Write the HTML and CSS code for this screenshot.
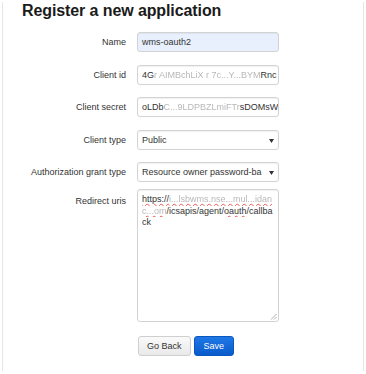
FILE: index.html
```html
<!DOCTYPE html>
<html>
<head>
<meta charset="utf-8">
<link rel="stylesheet" href="styles.css">
</head>
<body>
<div class="panel">
  <h1 class="title">Register a new application</h1>
  <form class="form">
    <div class="row">
      <label class="label">Name</label>
      <div class="field autofill">wms-oauth2</div>
    </div>
    <div class="row">
      <label class="label">Client id</label>
      <div class="field">4G<span class="blur">r AIMBchLiX r 7c...Y...BYM</span>Rnc</div>
    </div>
    <div class="row">
      <label class="label">Client secret</label>
      <div class="field">oLDb<span class="blur">C...9LDPBZLmiFTr</span>sDOMsW</div>
    </div>
    <div class="row">
      <label class="label">Client type</label>
      <div class="field select">Public<svg class="caret" width="5" height="4" viewBox="0 0 5 4"><path d="M0 0H5L2.5 4Z" fill="#333"/></svg></div>
    </div>
    <div class="row tight">
      <label class="label">Authorization grant type</label>
      <div class="field select"><span class="clip">Resource owner password-ba</span><svg class="caret" width="5" height="4" viewBox="0 0 5 4"><path d="M0 0H5L2.5 4Z" fill="#333"/></svg></div>
    </div>
    <div class="row">
      <label class="label">Redirect uris</label>
      <div class="area">
        <div class="line"><span class="sp">https://</span><span class="sp blur">i...lsbwms.nse...mul...idan</span></div>
        <div class="line"><span class="sp blur">c...om</span>/icsapis/agent/<span class="sp">oauth</span>/callba</div>
        <div class="line">ck</div>
        <svg class="grip" width="7" height="7" viewBox="0 0 7 7"><path d="M6.5 1L1 6.5M6.5 4L4 6.5" stroke="#999" stroke-width="0.8"/></svg>
      </div>
    </div>
    <div class="actions">
      <button type="button" class="btn">Go Back</button>
      <button type="button" class="btn primary">Save</button>
    </div>
  </form>
</div>
</body>
</html>
```
FILE: styles.css
```css
html, body {
  margin: 0;
  padding: 0;
  background: #fff;
  overflow: hidden;
}
body {
  font-family: "Liberation Sans", Arial, sans-serif;
  color: #333;
}
.panel {
  box-sizing: border-box;
  margin: 2px 0 0 2px;
  width: 362px;
  height: 369px;
  border-left: 1px solid #e6e6e6;
  border-right: 1px solid #e6e6e6;
}
.title {
  margin: 0;
  padding-left: 19px;
  font-size: 16px;
  line-height: 18px;
  font-weight: bold;
  color: #1b1b1b;
  letter-spacing: -0.1px;
}
.form {
  margin-top: 12px;
}
.row {
  display: flex;
  gap: 11px;
  margin-bottom: 12.5px;
}
.row.tight {
  margin-bottom: 9px;
}
.label {
  width: 123px;
  flex: none;
  text-align: right;
  font-size: 9px;
  line-height: 20px;
  color: #333;
}
.field {
  box-sizing: border-box;
  width: 142px;
  height: 20px;
  border: 1px solid #d3d3d3;
  border-radius: 3px;
  box-shadow: inset 0 1px 1px rgba(0,0,0,0.06);
  padding: 0 4px;
  font-size: 9px;
  line-height: 18px;
  color: #333;
  white-space: nowrap;
  overflow: hidden;
  background: #fff;
}
.field.autofill {
  background: #e8f0fe;
}
.field.select {
  display: flex;
  align-items: center;
  position: relative;
  padding-right: 12px;
}
.clip {
  overflow: hidden;
  white-space: nowrap;
  flex: 1;
}
.caret {
  position: absolute;
  right: 4px;
  top: 8px;
}
.blur {
  color: #b8b8b8;
  filter: blur(0.5px);
}
.area {
  position: relative;
  box-sizing: border-box;
  width: 142px;
  height: 133px;
  margin-top: -2px;
  border: 1px solid #d3d3d3;
  border-radius: 3px;
  box-shadow: inset 0 1px 1px rgba(0,0,0,0.06);
  padding: 4px 4px;
  font-size: 9px;
  line-height: 11.5px;
  color: #333;
}
.line {
  white-space: nowrap;
  overflow: hidden;
}
.sp {
  text-decoration: underline wavy rgba(225, 40, 40, 0.75);
  text-decoration-thickness: 0.5px;
  text-underline-offset: 1px;
}
.grip {
  position: absolute;
  right: 1px;
  bottom: 1px;
}
.actions {
  display: flex;
  gap: 3px;
  padding-left: 135px;
  margin-top: 14px;
}
.btn {
  box-sizing: border-box;
  height: 20px;
  padding: 0 8px;
  font-family: "Liberation Sans", Arial, sans-serif;
  font-size: 9px;
  border: 1px solid #cfcfcf;
  border-radius: 3px;
  background: linear-gradient(#fafafa, #e9e9e9);
  color: #333;
}
.btn.primary {
  border-color: #0a57c0;
  background: linear-gradient(#1f78e6, #0a5bcc);
  color: #fff;
  padding: 0 9px;
}
```
